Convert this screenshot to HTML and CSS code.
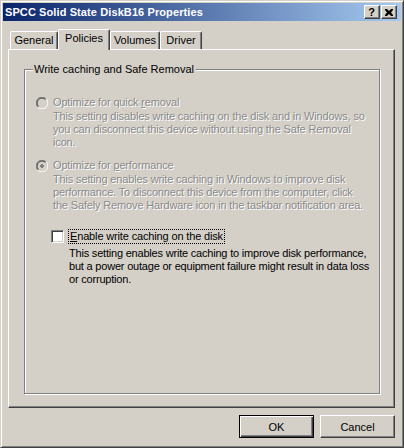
FILE: index.html
```html
<!DOCTYPE html>
<html>
<head>
<meta charset="utf-8">
<link rel="stylesheet" href="styles.css">
</head>
<body>
<div class="window">
  <div class="titlebar">
    <span class="title">SPCC Solid State DiskB16 Properties</span>
    <div class="caption-buttons">
      <div class="cbtn help">?</div>
      <div class="cbtn close">
        <svg width="8" height="7" viewBox="0 0 8 7"><path d="M0 0h2l2 2 2-2h2v1l-2 2.5 2 2.5v1h-2l-2-2-2 2h-2v-1l2-2.5-2-2.5z" fill="#000"/></svg>
      </div>
    </div>
  </div>
  <div class="content">
    <div class="tabs">
      <div class="tab w-general">General</div>
      <div class="tab selected w-policies">Policies</div>
      <div class="tab w-volumes">Volumes</div>
      <div class="tab w-driver">Driver</div>
    </div>
    <div class="panel">
      <div class="group">
        <span class="legend">Write caching and Safe Removal</span>
        <div class="option disabled first">
          <div class="row">
            <svg class="radio" width="12" height="12" viewBox="0 0 12 12">
              <circle cx="6" cy="6" r="5.5" fill="#D4D0C8"/>
              <path d="M1.8 10.2A5.5 5.5 0 0 1 10.2 1.8" fill="none" stroke="#808080"/>
              <path d="M10.2 1.8A5.5 5.5 0 0 1 1.8 10.2" fill="none" stroke="#fff"/>
              <path d="M2.5 9.5A4.5 4.5 0 0 1 9.5 2.5" fill="none" stroke="#404040"/>
            </svg>
            <span class="label">Optimize for quick <u>r</u>emoval</span>
          </div>
          <div class="desc">This setting disables write caching on the disk and in Windows, so<br>you can disconnect this device without using the Safe Removal<br>icon.</div>
        </div>
        <div class="option disabled second">
          <div class="row">
            <svg class="radio" width="12" height="12" viewBox="0 0 12 12">
              <circle cx="6" cy="6" r="5.5" fill="#D4D0C8"/>
              <path d="M1.8 10.2A5.5 5.5 0 0 1 10.2 1.8" fill="none" stroke="#808080"/>
              <path d="M10.2 1.8A5.5 5.5 0 0 1 1.8 10.2" fill="none" stroke="#fff"/>
              <path d="M2.5 9.5A4.5 4.5 0 0 1 9.5 2.5" fill="none" stroke="#404040"/>
              <rect x="4" y="5" width="4" height="2" fill="#808080"/>
              <rect x="5" y="4" width="2" height="4" fill="#808080"/>
            </svg>
            <span class="label">Optimize for <u>p</u>erformance</span>
          </div>
          <div class="desc">This setting enables write caching in Windows to improve disk<br>performance. To disconnect this device from the computer, click<br>the Safely Remove Hardware icon in the taskbar notification area.</div>
        </div>
        <div class="option check">
          <div class="row">
            <span class="checkbox"></span>
            <span class="label focus"><u>E</u>nable write caching on the disk</span>
          </div>
          <div class="desc">This setting enables write caching to improve disk performance,<br>but a power outage or equipment failure might result in data loss<br>or corruption.</div>
        </div>
      </div>
    </div>
    <div class="buttons">
      <div class="btn default">OK</div>
      <div class="btn">Cancel</div>
    </div>
  </div>
</div>
</body>
</html>
```
FILE: styles.css
```css
* { box-sizing: border-box; }
html, body { margin: 0; padding: 0; background: #D4D0C8; }
body {
  font-family: "Liberation Sans", Arial, sans-serif;
  font-size: 11px;
  color: #000;
}
.window {
  width: 404px;
  height: 448px;
  border: 1px solid;
  border-color: #D4D0C8 #404040 #404040 #D4D0C8;
  box-shadow: inset 1px 1px 0 #fff, inset -1px -1px 0 #808080;
  padding: 2px;
  background: #D4D0C8;
  display: flex;
  flex-direction: column;
}
.titlebar {
  height: 18px;
  background: linear-gradient(to right, #0A246A, #A6CAF0);
  display: flex;
  align-items: center;
  justify-content: space-between;
  padding-left: 2px;
  padding-right: 4px;
}
.title {
  color: #fff;
  font-weight: bold;
  font-size: 11px;
  line-height: 18px;
  letter-spacing: 0.1px;
}
.caption-buttons {
  display: flex;
  gap: 1px;
}
.cbtn {
  width: 16px;
  height: 14px;
  background: #D4D0C8;
  border: 1px solid;
  border-color: #fff #404040 #404040 #fff;
  box-shadow: inset -1px -1px 0 #808080;
  display: flex;
  align-items: center;
  justify-content: center;
}
.help {
  font-weight: bold;
  font-size: 11px;
  line-height: 12px;
  padding-right: 1px;
}
.close svg { display: block; margin-right: 1px; }
.content {
  flex: 1;
  display: flex;
  flex-direction: column;
  padding: 8px 6px 7px 5px;
}
.tabs {
  height: 20px;
  display: flex;
  align-items: flex-end;
  padding-left: 2px;
}
.tab {
  height: 18px;
  border: 1px solid;
  border-bottom: none;
  border-color: #fff #404040 #404040 #fff;
  border-radius: 2px 2px 0 0;
  box-shadow: inset -1px 0 0 #808080;
  text-align: center;
  line-height: 17px;
  background: #D4D0C8;
}
.tab.selected {
  height: 21px;
  margin-bottom: -1px;
  line-height: 16px;
  position: relative;
  z-index: 1;
  padding-bottom: 4px;
}
.w-general { width: 48px; }
.w-policies { width: 52px; }
.w-volumes { width: 50px; }
.w-driver { width: 42px; }
.panel {
  height: 359px;
  border: 1px solid;
  border-color: #fff #404040 #404040 #fff;
  box-shadow: inset -1px -1px 0 #808080;
  padding: 19px 14px 13px 15px;
  display: flex;
}
.group {
  flex: 1;
  position: relative;
  border: 1px solid #808080;
  box-shadow: inset 1px 1px 0 #fff, 1px 1px 0 #fff;
  padding: 26px 0 0 11px;
}
.legend {
  position: absolute;
  top: -7px;
  left: 8px;
  padding: 0 2px 0 1px;
  background: #D4D0C8;
  line-height: 13px;
}
.option { line-height: 13px; white-space: nowrap; letter-spacing: -0.15px; }
.row {
  display: flex;
  align-items: center;
  height: 13px;
}
.radio { display: block; flex: none; margin-right: 5px; }
.desc { padding-left: 17px; }
.disabled { color: #8a8a8a; text-shadow: 1px 1px 0 #fff; }
.first .desc { margin-top: 1px; }
.second { margin-top: 10px; }
.second .desc { margin-top: 1px; }
.check { margin-top: 18px; padding-left: 15px; }
.check .option, .check .desc { letter-spacing: -0.2px; }
.checkbox {
  width: 13px;
  height: 13px;
  flex: none;
  background: #fff;
  border: 1px solid;
  border-color: #808080 #fff #fff #808080;
  box-shadow: inset 1px 1px 0 #404040, inset -1px -1px 0 #D4D0C8;
  margin-right: 5px;
}
.focus {
  outline: 1px dotted #000;
  outline-offset: 0;
  padding: 0 1px;
  line-height: 13px;
}
.check .desc { margin-top: 4px; padding-left: 18px; }
.buttons {
  display: flex;
  justify-content: flex-end;
  gap: 6px;
  margin-top: 7px;
}
.btn {
  width: 75px;
  height: 23px;
  border: 1px solid;
  border-color: #fff #404040 #404040 #fff;
  box-shadow: inset -1px -1px 0 #808080;
  display: flex;
  align-items: center;
  justify-content: center;
}
.btn.default {
  border-color: #000;
  box-shadow: inset 1px 1px 0 #fff, inset -1px -1px 0 #404040, inset -2px -2px 0 #808080;
}
```
